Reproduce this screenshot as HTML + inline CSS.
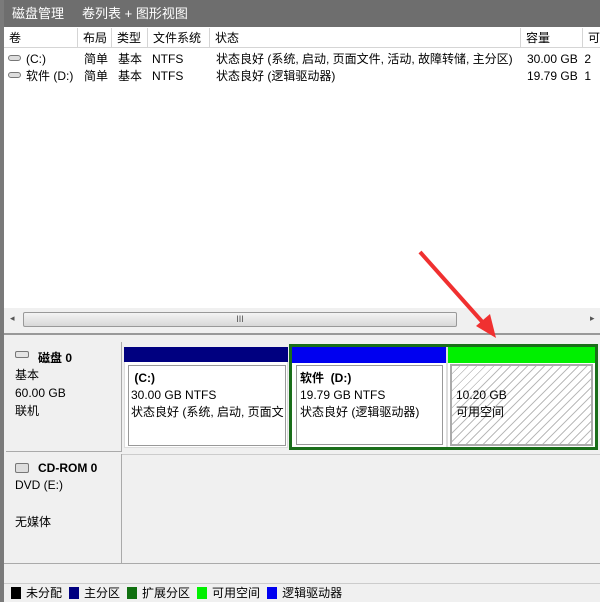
<!DOCTYPE html><html><head><meta charset="utf-8"><style>
*{margin:0;padding:0;box-sizing:border-box}
body{width:600px;height:602px;overflow:hidden;background:#f0f0f0;font-family:"Liberation Sans","Noto Sans CJK SC",sans-serif;font-size:12px;color:#000;position:relative}
.a{position:absolute;white-space:nowrap}
.hd{position:absolute;top:28px;height:20px;line-height:20px;padding-left:5px;border-right:1px solid #d5d5d5;background:#fff}
.lg{display:inline-block;width:10px;height:12px;vertical-align:-2px;margin-left:7px;margin-right:5px}
</style></head><body>
<div class="a" style="left:0;top:0;width:4px;height:602px;background:#7a7a7a"></div>
<div class="a" style="left:4px;top:0;width:596px;height:27px;background:#6e6e6e;color:#fff;font-size:13px;line-height:27px;padding-left:8px">磁盘管理&nbsp;&nbsp;&nbsp;&nbsp;&nbsp;卷列表 + 图形视图</div>
<div class="a" style="left:4px;top:27px;width:596px;height:281px;background:#fff"></div>
<div class="hd" style="left:4px;width:74px">卷</div>
<div class="hd" style="left:78px;width:34px">布局</div>
<div class="hd" style="left:112px;width:36px">类型</div>
<div class="hd" style="left:148px;width:62px">文件系统</div>
<div class="hd" style="left:210px;width:311px">状态</div>
<div class="hd" style="left:521px;width:62px">容量</div>
<div class="hd" style="left:583px;width:20px">可</div>
<div class="a" style="left:4px;top:47px;width:596px;height:1px;background:#d5d5d5"></div>
<div class="a" style="left:8px;top:55px;width:13px;height:6px;border:1px solid #777;border-radius:3px;background:#ddd"></div>
<div class="a" style="left:8px;top:72px;width:13px;height:6px;border:1px solid #777;border-radius:3px;background:#ddd"></div>
<div class="a" style="top:51px;left:26px;line-height:16px">(C:)</div>
<div class="a" style="top:68px;left:26px;line-height:16px">软件 (D:)</div>
<div class="a" style="top:51px;left:84px;line-height:16px">简单&nbsp;&nbsp;&nbsp;基本&nbsp;&nbsp;&nbsp;NTFS</div>
<div class="a" style="top:68px;left:84px;line-height:16px">简单&nbsp;&nbsp;&nbsp;基本&nbsp;&nbsp;&nbsp;NTFS</div>
<div class="a" style="top:51px;left:216px;line-height:16px">状态良好 (系统, 启动, 页面文件, 活动, 故障转储, 主分区)</div>
<div class="a" style="top:68px;left:216px;line-height:16px">状态良好 (逻辑驱动器)</div>
<div class="a" style="top:51px;left:527px;line-height:16px">30.00 GB&nbsp;&nbsp;2</div>
<div class="a" style="top:68px;left:527px;line-height:16px">19.79 GB&nbsp;&nbsp;1</div>
<div class="a" style="left:4px;top:308px;width:596px;height:24px;background:#f0f0f0"></div>
<div class="a" style="left:10px;top:313px;font-size:9px;color:#555">◂</div>
<div class="a" style="left:590px;top:313px;font-size:9px;color:#555">▸</div>
<div class="a" style="left:23px;top:312px;width:434px;height:15px;border:1px solid #999;border-radius:2px;background:linear-gradient(#f4f4f4,#d8d8d8);text-align:center;font-size:9px;line-height:13px;color:#555">III</div>
<div class="a" style="left:4px;top:333px;width:596px;height:2px;background:#999"></div>
<div class="a" style="left:6px;top:342px;width:116px;height:110px;border-right:1px solid #aaa;border-bottom:1px solid #aaa"></div>
<div class="a" style="left:15px;top:351px;width:14px;height:7px;border:1px solid #777;border-radius:2px;background:#e4e4e4"></div>
<div class="a" style="left:38px;top:349px;font-weight:bold">磁盘 0</div>
<div class="a" style="left:15px;top:366px;line-height:18px">基本<br>60.00 GB<br>联机</div>
<div class="a" style="left:124px;top:347px;width:164px;height:15px;background:#000080"></div>
<div class="a" style="left:124px;top:362px;width:164px;height:86px;background:#fff;border:1px solid #ddd;border-top:none"></div>
<div class="a" style="left:128px;top:365px;width:158px;height:81px;border:1px solid #999;background:#fff"></div>
<div class="a" style="left:131px;top:370px;line-height:17px;overflow:hidden;width:153px"><b>&nbsp;(C:)</b><br>30.00 GB NTFS<br>状态良好 (系统, 启动, 页面文</div>
<div class="a" style="left:289px;top:344px;width:309px;height:106px;border:3px solid #1a6e1a;background:#fff"></div>
<div class="a" style="left:292px;top:347px;width:154px;height:16px;background:#0000f0"></div>
<div class="a" style="left:446px;top:347px;width:2px;height:100px;background:#ddd"></div>
<div class="a" style="left:448px;top:347px;width:147px;height:16px;background:#00f000"></div>
<div class="a" style="left:296px;top:365px;width:147px;height:80px;border:1px solid #999"></div>
<div class="a" style="left:300px;top:370px;line-height:17px"><b>软件&nbsp;&nbsp;(D:)</b><br>19.79 GB NTFS<br>状态良好 (逻辑驱动器)</div>
<div class="a" style="left:450px;top:364px;width:143px;height:82px;border:2px solid #aaa;background:repeating-linear-gradient(135deg,#fff 0 5px,#bbb 5px 6px)"></div>
<div class="a" style="left:456px;top:387px;line-height:17px">10.20 GB<br>可用空间</div>
<div class="a" style="left:6px;top:454px;width:116px;height:110px;border-right:1px solid #aaa;border-bottom:1px solid #aaa"></div>
<div class="a" style="left:122px;top:454px;width:478px;height:1px;background:#ccc"></div>
<div class="a" style="left:4px;top:563px;width:596px;height:1px;background:#aaa"></div>
<div class="a" style="left:15px;top:463px;width:14px;height:10px;border:1px solid #777;border-radius:2px;background:#ddd"></div>
<div class="a" style="left:38px;top:461px;font-weight:bold">CD-ROM 0</div>
<div class="a" style="left:15px;top:478px">DVD (E:)</div>
<div class="a" style="left:15px;top:513px">无媒体</div>
<div class="a" style="left:4px;top:583px;width:596px;height:1px;background:#ccc"></div>
<div class="a" style="left:4px;top:586px;line-height:14px;font-size:12px">
<span class="lg" style="background:#000"></span>未分配<span class="lg" style="background:#000080"></span>主分区<span class="lg" style="background:#107010"></span>扩展分区<span class="lg" style="background:#00f000"></span>可用空间<span class="lg" style="background:#0000f0"></span>逻辑驱动器</div>
<svg class="a" style="left:0;top:0" width="600" height="602"><line x1="420" y1="252" x2="486" y2="326" stroke="#f03030" stroke-width="4"/><polygon points="496,338 476,326 490,314" fill="#f03030"/></svg>
</body></html>
